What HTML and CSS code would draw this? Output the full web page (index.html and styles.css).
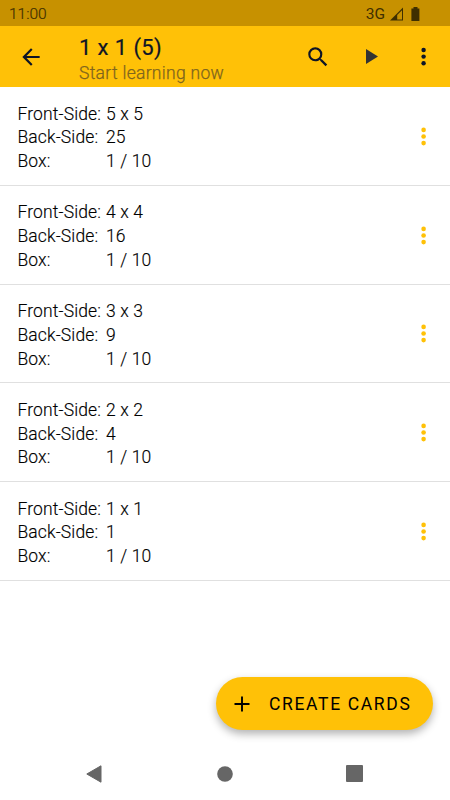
FILE: index.html
```html
<!DOCTYPE html>
<html lang="en">

<head>
  <meta charset="UTF-8">
  <meta name="viewport" content="width=device-width, initial-scale=1.0">
  <title>1 x 1 (5)</title>
  <link rel="stylesheet" href="styles.css">
</head>

<body>
  <div class="status">
    <span class="time">11:00</span>
    <span class="network">3G</span>
    <svg class="signal" width="14" height="14" viewBox="0 0 14 14">
      <path d="M0 13.5L13 .5v13z" fill="#3f2f00" />
      <path d="M7.2 8L12 3.2v9.2H7.2z" fill="#c79100" />
    </svg>
    <svg class="battery" width="9" height="14" viewBox="0 0 9 14">
      <path d="M2.5 0h4v1.4H8.4V14H.4V1.4h2.1z" fill="#3f2f00" />
    </svg>
  </div>

  <header class="toolbar">
    <svg class="back" width="26" height="26" viewBox="0 0 24 24">
      <path d="M20 11H7.83l5.59-5.59L12 4l-8 8 8 8 1.41-1.41L7.83 13H20v-2z" />
    </svg>
    <div class="titles">
      <h1>1 x 1 (5)</h1>
      <p>Start learning now</p>
    </div>
    <svg class="search" width="26" height="26" viewBox="0 0 24 24">
      <path d="M15.5 14h-.79l-.28-.27A6.47 6.47 0 0 0 16 9.5 6.5 6.5 0 1 0 9.5 16c1.61 0 3.09-.59 4.23-1.57l.27.28v.79l5 4.99L20.49 19l-4.99-5zm-6 0C7.01 14 5 11.99 5 9.5S7.01 5 9.5 5 14 7.01 14 9.5 11.99 14 9.5 14z" />
    </svg>
    <svg class="play" width="12" height="15" viewBox="0 0 12 15">
      <path d="M0 0l12 7.5L0 15z" />
    </svg>
    <svg class="dots" width="6" height="20" viewBox="0 0 6 20">
      <circle cx="2.6" cy="3" r="2.2" /><circle cx="2.6" cy="9.6" r="2.2" /><circle cx="2.6" cy="16.2" r="2.2" />
    </svg>
  </header>

  <main class="cards">
    <div class="card">
      <dl>
        <dt>Front-Side:</dt><dd>5 x 5</dd>
        <dt>Back-Side:</dt><dd>25</dd>
        <dt>Box:</dt><dd>1 / 10</dd>
      </dl>
      <svg class="dots" width="6" height="20" viewBox="0 0 6 20">
        <circle cx="2.6" cy="3.9" r="2.3" /><circle cx="2.6" cy="10.5" r="2.3" /><circle cx="2.6" cy="17.1" r="2.3" />
      </svg>
    </div>
    <div class="card">
      <dl>
        <dt>Front-Side:</dt><dd>4 x 4</dd>
        <dt>Back-Side:</dt><dd>16</dd>
        <dt>Box:</dt><dd>1 / 10</dd>
      </dl>
      <svg class="dots" width="6" height="20" viewBox="0 0 6 20">
        <circle cx="2.6" cy="3.9" r="2.3" /><circle cx="2.6" cy="10.5" r="2.3" /><circle cx="2.6" cy="17.1" r="2.3" />
      </svg>
    </div>
    <div class="card">
      <dl>
        <dt>Front-Side:</dt><dd>3 x 3</dd>
        <dt>Back-Side:</dt><dd>9</dd>
        <dt>Box:</dt><dd>1 / 10</dd>
      </dl>
      <svg class="dots" width="6" height="20" viewBox="0 0 6 20">
        <circle cx="2.6" cy="3.9" r="2.3" /><circle cx="2.6" cy="10.5" r="2.3" /><circle cx="2.6" cy="17.1" r="2.3" />
      </svg>
    </div>
    <div class="card">
      <dl>
        <dt>Front-Side:</dt><dd>2 x 2</dd>
        <dt>Back-Side:</dt><dd>4</dd>
        <dt>Box:</dt><dd>1 / 10</dd>
      </dl>
      <svg class="dots" width="6" height="20" viewBox="0 0 6 20">
        <circle cx="2.6" cy="3.9" r="2.3" /><circle cx="2.6" cy="10.5" r="2.3" /><circle cx="2.6" cy="17.1" r="2.3" />
      </svg>
    </div>
    <div class="card">
      <dl>
        <dt>Front-Side:</dt><dd>1 x 1</dd>
        <dt>Back-Side:</dt><dd>1</dd>
        <dt>Box:</dt><dd>1 / 10</dd>
      </dl>
      <svg class="dots" width="6" height="20" viewBox="0 0 6 20">
        <circle cx="2.6" cy="3.9" r="2.3" /><circle cx="2.6" cy="10.5" r="2.3" /><circle cx="2.6" cy="17.1" r="2.3" />
      </svg>
    </div>
  </main>

  <button class="create">
    <svg width="16" height="16" viewBox="0 0 16 16">
      <path d="M8 .5v15M.5 8h15" stroke="#000" stroke-width="1.9" />
    </svg>
    <span>CREATE CARDS</span>
  </button>

  <nav class="navbar">
    <svg width="16" height="18" viewBox="0 0 16 18">
      <path d="M15 .8v16.4L.8 9z" stroke-width="1" stroke-linejoin="round" />
    </svg>
    <svg width="18" height="16" viewBox="0 0 18 16">
      <circle cx="10" cy="8" r="7.8" />
    </svg>
    <svg width="17" height="17" viewBox="0 0 17 17">
      <rect width="17" height="17" rx="1" />
    </svg>
  </nav>
</body>

</html>
```
FILE: styles.css
```css
* {
  margin: 0;
  padding: 0;
  box-sizing: border-box;
}

body {
  height: 800px;
  display: flex;
  flex-direction: column;
  overflow: hidden;
  background: #fff;
  color: #000;
  font-family: Roboto, sans-serif;
}

/* status bar */
.status {
  height: 26px;
  flex: none;
  display: flex;
  align-items: center;
  padding: 1px 30px 0 9px;
  background: #c79100;
  color: #3f2f00;
  font-size: 15.5px;
}

.time {
  flex: 1;
  font-weight: 300;
  -webkit-text-stroke: .2px #3f2f00;
}

.signal {
  margin-left: 5px;
}

.battery {
  margin-left: 7px;
}

/* toolbar */
.toolbar {
  height: 61px;
  flex: none;
  display: flex;
  align-items: center;
  padding: 0 23.5px 0 17.5px;
  background: #ffc107;
}

.toolbar svg {
  fill: #0e1526;
}

.titles {
  flex: 1;
  margin-left: 35.5px;
  padding-top: 6px;
}

.titles h1 {
  font-size: 22px;
  line-height: 27px;
  font-weight: 400;
  letter-spacing: .4px;
  color: #0e1526;
  -webkit-text-stroke: .2px #0e1526;
}

.titles p {
  font-size: 17.5px;
  font-weight: 300;
  line-height: 25px;
  letter-spacing: .3px;
  color: #80651e;
  -webkit-text-stroke: .25px #80651e;
}

.toolbar .play {
  margin: 0 43px 0 35px;
  fill: #333;
}

/* card list */
.card {
  height: 98.8px;
  display: flex;
  align-items: center;
  justify-content: space-between;
  padding: 0 23.5px 0 17.5px;
  border-bottom: 1px solid #e0e0e0;
}

.card dl {
  display: grid;
  grid-template-columns: 88.5px auto;
  padding-top: 4.5px;
  font-size: 17.5px;
  font-weight: 300;
  line-height: 23.7px;
  letter-spacing: .12px;
  -webkit-text-stroke: .15px #000;
}

.card .dots {
  fill: #ffc107;
}

/* floating button */
.create {
  position: absolute;
  right: 17.5px;
  bottom: 70px;
  width: 217px;
  height: 53px;
  display: flex;
  align-items: center;
  gap: 19.5px;
  padding: 1px 0 0 18px;
  border: 0;
  border-radius: 27px;
  background: #ffc107;
  box-shadow: 0 4px 8px rgba(0, 0, 0, .3);
  color: #000;
  font: 400 17.5px Roboto, sans-serif;
  letter-spacing: 1.65px;
}

/* system navigation */
.navbar {
  height: 53px;
  flex: none;
  margin-top: auto;
  display: flex;
  align-items: center;
  justify-content: space-between;
  padding: 0 87px 0 86px;
}

.navbar svg {
  fill: #666;
  stroke: #666;
  stroke-width: 0;
}
```
